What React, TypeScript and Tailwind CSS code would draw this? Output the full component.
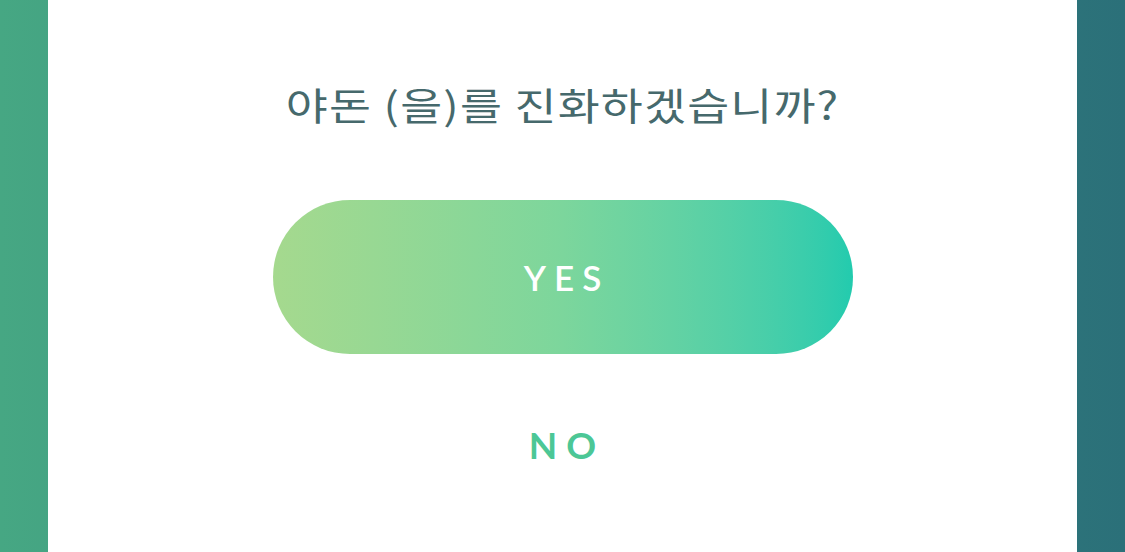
export default function App() {
  return (
    <div className="w-[1125px] h-[552px] overflow-hidden flex px-12 bg-gradient-to-r from-[#46a783] to-[#2b7079]">
      <div className="flex-1 bg-white flex flex-col items-center font-['Lato','Open_Sans',sans-serif]">
        <h1 className="mt-[78px] text-[38px] leading-[52px] text-[#46696c] tracking-[1px] scale-x-[1.2] whitespace-nowrap font-['Noto_Sans_CJK_KR','Noto_Sans',sans-serif]">
          야돈 (을)를 진화하겠습니까?
        </h1>
        <button className="mt-[70px] w-[580px] h-[154px] rounded-full bg-gradient-to-r from-[#a5d98e] via-[#7cd69c] via-50% to-[#22cbae] flex items-center justify-center text-white text-[35px] font-semibold tracking-[8px] pl-[8px]">
          YES
        </button>
        <button className="mt-[68px] text-[#4cc796] text-[37px] font-bold tracking-[9px] pl-[9px] leading-[46px]">
          NO
        </button>
      </div>
    </div>
  );
}
